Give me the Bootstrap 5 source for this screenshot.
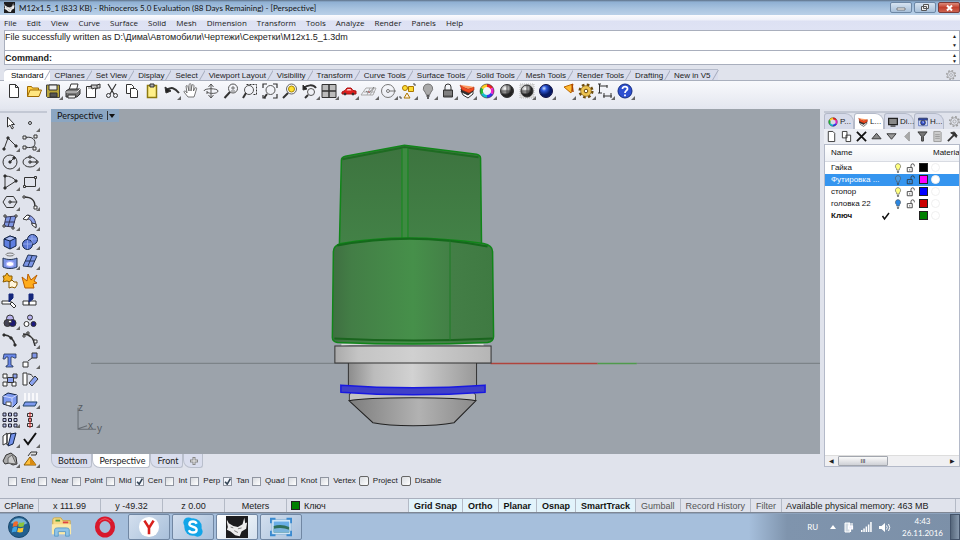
<!DOCTYPE html>
<html lang="en">
<head>
<meta charset="utf-8">
<meta name="viewport" content="width=device-width, initial-scale=1">
<title>M12x1.5_1 - Rhinoceros 5.0</title>
<link href="https://cdn.jsdelivr.net/npm/bootstrap@5.3.0/dist/css/bootstrap.min.css" rel="stylesheet">
<style>
:root{--face:#e0e3ec;--line:#a9afbd;--ui:"Liberation Sans",Arial,sans-serif;--seg:Lato,"Open Sans",sans-serif}
body{font-family:var(--ui);font-size:9px;line-height:12px;color:#222;background:var(--face);height:100vh;overflow:hidden}
main{min-height:0}
button,input{font:inherit;color:inherit}
button{border:0;background:none;padding:0}
a{color:inherit;text-decoration:none}
svg{display:block}
.titlebar{height:15px;background:linear-gradient(#5d7086 0,#8fb0d3 2px,#a9c4e0 9px,#b9d0e8 15px);font-family:var(--seg);font-size:8px;color:#111}
.winbtn{width:22px;height:11px;border:1px solid #6d87a5;border-radius:2px;background:linear-gradient(#d6e3f1,#a7bfd9);display:flex;align-items:center;justify-content:center}
.winbtn.shut{background:linear-gradient(#dc8b7c,#c2402e 50%,#cc6250);border-color:#7c3a38}
.winbtns{gap:2px}
.menus{height:15px;background:linear-gradient(#fafbfe 0,#eef0f9 5px,#dde1f3 6px,#dfe3f4);font-family:"Open Sans",sans-serif;font-size:8px;gap:10px}
.history{height:21px;background:#fff;border:1px solid var(--line)}
.cmdline{height:14px;background:#fff;border:1px solid var(--line);border-top:0}
.cmdline label{font-weight:bold}
.cmdline input{border:0;outline:0;height:10px;min-width:0;background:none}
.spin{width:9px;font-size:5px;line-height:6px;text-align:center}
.spin span{display:block}
.tabstrip{height:12px;border-bottom:1px solid var(--line);font-size:8px}
.tabstrip .tb{height:11px;line-height:11px;padding:0 7px 0 4px;position:relative;color:#222;background:#d9ddec;border-top:1px solid #b6bccb;white-space:nowrap}
.tabstrip .tb::after{content:"";position:absolute;right:2px;top:0;width:1px;height:10px;background:#a4aabb;transform:skewX(-30deg)}
.tabstrip .tb.on{background:#fff;color:#000;height:12px;padding-left:7px;border-radius:4px 0 0 0}
.toolbar-std{height:28px;background:linear-gradient(#f8f9fc,#e3e6ef)}
.tools-h{display:grid;grid-template-columns:repeat(32,1fr);width:100%;max-width:631px}
.tool{position:relative;display:flex;align-items:center;justify-content:center;min-width:0;min-height:0}
.tool svg,.ic{width:16px;height:16px;fill:none;stroke:#333;stroke-width:1;overflow:visible}
.tool.more::after{content:"";position:absolute;right:0;bottom:1px;border:2px solid #666;border-left-color:transparent;border-top-color:transparent}
.sidebar{width:51px;padding-top:2px}
.grip{height:2px;background:#c3c8d4}
.tools-v{display:grid;grid-template-columns:20px 20px;grid-auto-rows:1fr;flex:1 1 0;min-height:0}
.stage{min-width:0}
.viewport{background:#9ca3ab;position:relative;min-height:0}
.viewport>svg{position:absolute;inset:0;width:100%;height:100%}
.vtitle{position:absolute;left:0;top:0;height:13px;padding:0 4px 0 6px;background:#8ba6c2;font-family:var(--seg);color:#111}
.vtabs{height:15px}
.vtabs button{padding:0 4px 0 6px;height:14px;border:1px solid #b9bfcc;border-top:0;border-radius:0 0 3px 8px;background:#dadeee;font-family:var(--seg)}
.vtabs .on{background:#fff}
.panel{width:136px;padding:2px 0}
.ptabs{height:16px}
.ptabs button{height:16px;width:30px;padding-left:3px;display:flex;align-items:center;gap:2px;background:#d7dbea;border:1px solid #b4bac9;border-bottom:0;border-radius:3px 9px 0 0;white-space:nowrap;font-size:8px}
.ptabs .on{background:#fff}
.ptabs .ic{width:10px;height:10px;flex:none}
.ptools{height:15px;background:#eceef4;display:grid;grid-template-columns:repeat(9,1fr)}
.ptools svg{width:11px;height:11px}
.layers{background:#fff;border:1px solid #b4bac9;min-height:0;overflow:hidden;font-size:8px}
.layers table{width:100%;table-layout:fixed;border-collapse:collapse;color:#111}
.layers .c-name{width:54px}.layers .c-tick{width:13px}.layers .c-flag{width:12px}
.layers th{font-weight:normal;height:16px;background:linear-gradient(#fff,#f0f2f6);border-bottom:1px solid #d8dbe2;white-space:nowrap}
.layers td{height:12px;white-space:nowrap}
.layers td,.layers th{padding:0}
.layers td:first-child,.layers th:first-child{padding-left:6px}
.layers th:last-child{padding-left:4px}
.layers .picked{background:#3595ef;color:#fff}
.layers svg{width:10px;height:10px;fill:none;stroke:#333;margin:auto}
.sw{width:9px;height:9px;border:1px solid #222;display:block;margin:auto}
.c-black{background:#000}.c-mag{background:#f0f}.c-blue{background:#00f}.c-red{background:#c00}.c-green{background:#008000}
.dotm{width:9px;height:9px;border-radius:50%;border:1px solid #f0f0f0;display:block;margin-left:2px}
.picked .dotm{background:#fff}
.hscroll{height:11px;background:#f0f0f2;font-size:6px;border-top:1px solid #ddd}
.thumb{width:50px;height:10px;border:1px solid #a2a6ae;background:linear-gradient(#fafafa,#cfd1d6);border-radius:1px;line-height:8px;text-align:center}
.osnap{height:29px;gap:3px;padding-top:6px;font-size:8px}
.osnap label{display:flex;align-items:center;gap:4px}
.osnap input{appearance:none;width:9px;height:9px;margin:0;border:1px solid #9095a0;background:linear-gradient(135deg,#d8dbe0,#fff);display:block}
.osnap input:checked{background:#f4f6fc url("data:image/svg+xml,%3Csvg xmlns='http://www.w3.org/2000/svg' viewBox='0 0 8 8'%3E%3Cpath d='M1.5 4l2 2.2L6.5 1' fill='none' stroke='%23345' stroke-width='1.5'/%3E%3C/svg%3E") center/8px no-repeat}
.osnap .big input{width:10px;height:10px;border-radius:2px;border-color:#666}
.statusbar{height:15px;border-top:1px solid #a9afbd;border-bottom:1px solid #7f8794}
.statusbar>*{border-right:1px solid #b4bac6;display:flex;align-items:center;justify-content:center;white-space:nowrap;height:13px}
.statusbar .w1{width:62px}
.statusbar .w0{width:39px}
.statusbar .wl{width:122px}
.statusbar button,.statusbar .w0,.statusbar .w1,.statusbar .wl{flex:none}
.statusbar button{padding:0 5px;color:#555}
.statusbar .on{background:#e2f3fb;font-weight:bold;color:#111}
.taskbar{height:27px;gap:2px;background:linear-gradient(90deg,#a6bfdc 0,#a6bfdc 78%,#7f94ad 82%,#7c90a8 100%);border-top:1px solid #8ea3bd;color:#fff;font-family:var(--seg)}
.task{width:42px;height:26px;display:flex;align-items:center;justify-content:center}
.task.orb{width:38px}
.task svg{width:24px;height:22px}
.task.open{border:1px solid #7187a3;border-radius:2px;background:linear-gradient(135deg,#d3dfee,#a9c0db)}
.task.cur{background:linear-gradient(135deg,#fff,#d3e0ee)}
.tray{gap:7px;font-size:8px}
.desk{width:10px;height:26px;background:linear-gradient(90deg,#56677b,#8799ad);border:1px solid #44546a}
</style>
<script src="https://cdn.jsdelivr.net/npm/bootstrap@5.3.0/dist/js/bootstrap.bundle.min.js"></script>
</head>
<body class="d-flex flex-column">
<svg width="0" height="0" class="position-absolute" aria-hidden="true">
<defs>
<radialGradient id="gGray" cx=".35" cy=".3"><stop offset="0" stop-color="#fff"/><stop offset=".6" stop-color="#999"/><stop offset="1" stop-color="#222"/></radialGradient>
<radialGradient id="gBlue" cx=".35" cy=".3"><stop offset="0" stop-color="#cfe0ff"/><stop offset=".4" stop-color="#2c58d8"/><stop offset="1" stop-color="#061a66"/></radialGradient>
<symbol id="wheel" viewBox="0 0 16 16"><g fill="none" stroke-width="3"><path stroke="#e22" d="M8 2.500A5.500 5.500 0 0 1 12.800 5.300"/><path stroke="#e2c" d="M12.800 5.300a5.500 5.500 0 0 1 0 5.500"/><path stroke="#33e" d="M12.800 10.800A5.500 5.500 0 0 1 8 13.500"/><path stroke="#1bc" d="M8 13.500a5.500 5.500 0 0 1-4.800-2.700"/><path stroke="#2b3" d="M3.200 10.800a5.500 5.500 0 0 1 0-5.500"/><path stroke="#fc2" d="M3.200 5.300A5.500 5.500 0 0 1 8 2.500"/></g><circle cx="8" cy="8" r="7" fill="none" stroke="#333" stroke-width=".6"/></symbol>
<symbol id="strata" viewBox="0 0 16 16"><path d="M2 8l2 4 5 3 5-4V8z" fill="#fff" stroke="#333"/><path d="M2 6l1 3 6 3 5-4V5z" fill="#333" stroke="#222"/><path d="M1 2l8 4 6-2v3l-5 3-7-3z" fill="#f04a20" stroke="#9a2a10" stroke-width=".6"/><path d="M1 2l8 4 6-2-5-1z" fill="#ff9a60" stroke="none"/></symbol>
<symbol id="cog" viewBox="0 0 16 16"><circle cx="8" cy="8" r="5.500" fill="none" stroke="#999" stroke-width="1.200"/><circle cx="8" cy="8" r="2.300" fill="none" stroke="#999"/><circle cx="8" cy="8" r="7" fill="none" stroke="#999" stroke-width="2" stroke-dasharray="2.700 2.800"/></symbol>
<symbol id="bulb" viewBox="0 0 10 12"><path d="M5 .7a3.300 3.300 0 0 0-2 5.800l.5 2h3l.5-2A3.300 3.300 0 0 0 5 .7z" stroke="#555" stroke-width=".7"/><path d="M3.700 10h2.600M4 11.500h2" stroke="#444"/></symbol>
<symbol id="unlock" viewBox="0 0 12 12"><path d="M1.500 5.500h6v5h-6zM6 5V3a2 2 0 0 1 4 0v1M4.500 7.500v1.500" fill="none" stroke="#333"/></symbol>
<symbol id="rhino" viewBox="0 0 24 24"><path d="M0 0h24v24H0z" fill="#1c1c1e" stroke="none"/><path d="M1 4l2 4 5 3 5 1 5-3 2-7 1 6 2-1-1 7-5 3-2 5-5-1-5-4-4-2 1-3-1-5z" fill="#ededed" stroke="none"/><path d="M5 12l3 1M9 16l4 2M13 14l4-1" stroke="#777" fill="none"/></symbol>
</defs>
</svg>

<header>
<div class="titlebar d-flex align-items-center ps-1 pe-0">
<svg width="11" height="11" class="flex-shrink-0"><use href="#rhino"/></svg>
<span class="ms-1 flex-grow-1">M12x1.5_1 (833 KB) - Rhinoceros 5.0 Evaluation (88 Days Remaining) - [Perspective]</span>
<div class="winbtns d-flex">
<button type="button" class="winbtn" aria-label="Minimize"><svg width="10" height="8"><path d="M1 4h8v2H1z" fill="#fff" stroke="#555" stroke-width=".7"/></svg></button>
<button type="button" class="winbtn" aria-label="Restore"><svg width="10" height="9"><path d="M3.500 1.500h5v4h-5zM1.500 3.500h5v4h-5z" fill="#eee" stroke="#555"/></svg></button>
<button type="button" class="winbtn shut" aria-label="Close"><svg width="9" height="8"><path d="M2 1.500l5 5M7 1.500l-5 5" stroke="#fff" stroke-width="2"/></svg></button>
</div>
</div>
<nav class="menus d-flex align-items-center ps-1">
<a href="#">File</a><a href="#">Edit</a><a href="#">View</a><a href="#">Curve</a><a href="#">Surface</a><a href="#">Solid</a><a href="#">Mesh</a><a href="#">Dimension</a><a href="#">Transform</a><a href="#">Tools</a><a href="#">Analyze</a><a href="#">Render</a><a href="#">Panels</a><a href="#">Help</a>
</nav>
<div class="history d-flex justify-content-between ms-1">
<span>File successfully written as D:\Дима\Автомобили\Чертежи\Секретки\M12x1.5_1.3dm</span>
<div class="spin d-flex flex-column justify-content-around"><span>▲</span><span>▼</span></div>
</div>
<div class="cmdline d-flex align-items-center ms-1 mb-1">
<label for="cmd">Command:</label><input id="cmd" type="text" class="flex-grow-1">
<div class="spin"><span>▲</span><span>▼</span></div>
</div>
<div class="tabstrip d-flex ps-1">
<button class="tb on" type="button">Standard</button><button class="tb" type="button">CPlanes</button><button class="tb" type="button">Set View</button><button class="tb" type="button">Display</button><button class="tb" type="button">Select</button><button class="tb" type="button">Viewport Layout</button><button class="tb" type="button">Visibility</button><button class="tb" type="button">Transform</button><button class="tb" type="button">Curve Tools</button><button class="tb" type="button">Surface Tools</button><button class="tb" type="button">Solid Tools</button><button class="tb" type="button">Mesh Tools</button><button class="tb" type="button">Render Tools</button><button class="tb" type="button">Drafting</button><button class="tb" type="button">New in V5</button>
<button type="button" class="ms-auto me-1" aria-label="Toolbar options"><svg width="10" height="10"><use href="#cog"/></svg></button>
</div>
<div class="toolbar-std ps-1 pb-2 d-flex">
<div class="tools-h">
<button class="tool" type="button" aria-label="New"><svg viewBox="0 0 16 16"><path d="M3.500 1.500h6l3 3v10h-9zM9.500 1.500v3h3" fill="#fff"/></svg></button>
<button class="tool" type="button" aria-label="Open"><svg viewBox="0 0 16 16"><path d="M1.500 13.500v-10h4l1 1.500h6v2" fill="#ffd24a" stroke="#a06a00"/><path d="M1.500 13.500L4 7h11.500L13 13.500z" fill="#ffe680" stroke="#a06a00"/></svg></button>
<button class="tool more" type="button" aria-label="Save"><svg viewBox="0 0 16 16"><path d="M1.500 2h13v12.500h-12l-1-1z" fill="#b9a53a" stroke="#444"/><path d="M4 2h8v5H4z" fill="#eee"/><path d="M5 10h7v4H5z" fill="#555"/></svg></button>
<button class="tool" type="button" aria-label="Print"><svg viewBox="0 0 16 16"><path d="M4 7l2-6h7l-1.500 6" fill="#fff"/><path d="M1 8l3-2h11v5l-3 3H1z" fill="#777"/><path d="M3 12h8l-1 3H3z" fill="#eee"/><path d="M1 9h11l3-3" stroke="#ddd"/></svg></button>
<button class="tool" type="button" aria-label="Properties"><svg viewBox="0 0 16 16"><path d="M1.500 3.500h9v11h-9z" fill="#fff"/><path d="M3 5h4" stroke="#777"/><path d="M6 2h6v4l-2-1-3 1zM12 2l3-1v4h-3" fill="#ccc"/></svg></button>
<button class="tool" type="button" aria-label="Cut"><svg viewBox="0 0 16 16"><path d="M4 1l6 10M12 1L6 11" stroke-width="1.200"/><circle cx="4.500" cy="12.500" r="2"/><circle cx="11.500" cy="12.500" r="2"/></svg></button>
<button class="tool" type="button" aria-label="Copy"><svg viewBox="0 0 16 16"><path d="M2.500 1.500h5l2 2v7h-7z" fill="#fff"/><path d="M6.500 5.500h5l2 2v7h-7z" fill="#fff"/></svg></button>
<button class="tool" type="button" aria-label="Paste"><svg viewBox="0 0 16 16"><path d="M3.500 2.500h9v12h-9z" fill="#fff08a" stroke="#8d7a10" stroke-width="1.500"/><path d="M6 1h4v3H6z" fill="#aaa"/></svg></button>
<button class="tool more" type="button" aria-label="Undo"><svg viewBox="0 0 16 16"><path d="M2 8c5-5 9-3 13 2" stroke-width="2"/><path d="M1 4l1 6 5-2z" fill="#222"/></svg></button>
<button class="tool" type="button" aria-label="Pan"><svg viewBox="0 0 16 16"><path d="M5 14l-4-5c0-2 2-1 3 1L3 3c1-1 2 0 2 1l1 4V1.500c1-1 2-1 2 0V8l1-6c1-1 2 0 2 1l-.5 5L12 5c1-1 2 0 1.500 1L12 11l-1 3z" fill="#fff" stroke="#555" stroke-width=".8"/></svg></button>
<button class="tool" type="button" aria-label="Rotate view"><svg viewBox="0 0 16 16"><path d="M8 1v14M5.500 4L8 1l2.500 3M5.500 12L8 15l2.500-3" stroke="#555"/><path d="M1 8c0-3 14-3 14 0s-9 3-11 1M4 11V8" stroke="#555"/></svg></button>
<button class="tool" type="button" aria-label="Zoom dynamic"><svg viewBox="0 0 16 16"><circle cx="10" cy="5.500" r="4.500" stroke="#555"/><path d="M7 9l-5.500 6" stroke-width="2"/><path d="M10 3v4M8 5h4M8 8h4" stroke="#555" stroke-width=".8"/></svg></button>
<button class="tool" type="button" aria-label="Zoom window"><svg viewBox="0 0 16 16"><path d="M4.500 1.500h10v10h-3" stroke-dasharray="2 1"/><circle cx="7" cy="7" r="4.500" stroke="#555"/><path d="M4 10l-3 5" stroke-width="2"/></svg></button>
<button class="tool" type="button" aria-label="Zoom extents"><svg viewBox="0 0 16 16"><path d="M1 5V1h4M11 1h4v4M15 11v4h-4M1 12v3h3" stroke-width="1.200"/><circle cx="8.500" cy="7" r="4.500" stroke="#555"/><path d="M5 11l-3 4" stroke-width="2"/></svg></button>
<button class="tool" type="button" aria-label="Zoom selected"><svg viewBox="0 0 16 16"><circle cx="9.500" cy="6" r="5" stroke="#666"/><circle cx="9.500" cy="6" r="3" fill="#ffe033" stroke="#a80"/><path d="M6 10l-5 5" stroke-width="2"/></svg></button>
<button class="tool more" type="button" aria-label="Undo view"><svg viewBox="0 0 16 16"><circle cx="9" cy="9" r="3.500" stroke="#555"/><path d="M2 5c3-3 9-4 12 0" stroke-width="2"/><path d="M1 2v5l4-1z" fill="#222"/><path d="M6 12l-3 3" stroke-width="2"/></svg></button>
<button class="tool more" type="button" aria-label="Four viewports"><svg viewBox="0 0 16 16"><path d="M1 1.500h14v13H1z" fill="#bbb"/><path d="M8 1v14M1 8h14" stroke-width="1.500"/></svg></button>
<button class="tool more" type="button" aria-label="Named view"><svg viewBox="0 0 16 16"><path d="M1 9l3-1.500L6 5h4l2 2.500 3 .5v3H1z" fill="#e02020" stroke="#a11"/><path d="M6.500 6h3l1 1.500H5.500z" fill="#fcc" stroke="none"/><circle cx="4" cy="11" r="1" fill="#222"/><circle cx="12" cy="11" r="1" fill="#222"/></svg></button>
<button class="tool more" type="button" aria-label="Set CPlane"><svg viewBox="0 0 16 16"><path d="M0 12L5 5h10l-3 7zM3 9h11M6 12l3-7M9 12l4-7" stroke="#aaa"/><path d="M5 8c3 3 5 0 8-4" stroke="#777"/><path d="M7 8l2 2" stroke="#c66"/></svg></button>
<button class="tool more" type="button" aria-label="Object snap"><svg viewBox="0 0 16 16"><circle cx="7" cy="8" r="6.500" stroke="#777"/><circle cx="7" cy="8" r="1.500" stroke="#777"/><path d="M9 8h6" stroke="#777"/></svg></button>
<button class="tool more" type="button" aria-label="Select"><svg viewBox="0 0 16 16"><circle cx="5" cy="5" r="2.500" fill="#fd3" stroke="#a70"/><path d="M8.500 3.500h5v5h-5z" fill="#fd3" stroke="#a70"/><path d="M7 10l3 5H4z" fill="#fed" stroke="#a70"/><path d="M13 1h2v2M0 13v2h2" stroke="#444"/></svg></button>
<button class="tool more" type="button" aria-label="Hide"><svg viewBox="0 0 16 16"><path d="M8 1a4.500 4.500 0 0 0-3 8l1.500 3h3L11 9A4.500 4.500 0 0 0 8 1z" fill="#aaa" stroke="#777"/><path d="M6.500 13h3M7 15h2" stroke-width="1.500"/></svg></button>
<button class="tool more" type="button" aria-label="Lock"><svg viewBox="0 0 16 16"><path d="M5 7V4a3 3 0 0 1 6 0v3"/><path d="M3.500 7h9v7h-9z" fill="#666"/><path d="M4 9h8M4 11h8" stroke="#999"/></svg></button>
<button class="tool more" type="button" aria-label="Layers"><svg><use href="#strata"/></svg></button>
<button class="tool more" type="button" aria-label="Properties panel"><svg><use href="#wheel"/></svg></button>
<button class="tool" type="button" aria-label="Shade"><svg viewBox="0 0 16 16"><circle cx="8" cy="8" r="6.500" fill="url(#gGray)"/><path d="M8 2v12M2 8h12" stroke="#333" stroke-width=".7"/></svg></button>
<button class="tool more" type="button" aria-label="Shaded viewport"><svg viewBox="0 0 16 16"><path d="M1 1h14v14H1z" fill="#ddd" stroke="#bbb" stroke-dasharray="1 1"/><circle cx="8" cy="8" r="6" fill="url(#gGray)"/><path d="M8 2v12M2 8h12" stroke="#333" stroke-width=".7"/></svg></button>
<button class="tool more" type="button" aria-label="Render"><svg viewBox="0 0 16 16"><circle cx="8" cy="8" r="6.500" fill="url(#gBlue)" stroke="#114"/></svg></button>
<button class="tool more" type="button" aria-label="Spotlight"><svg viewBox="0 0 16 16"><path d="M6 4l9-3-2 9z" fill="#fb3" stroke="#b60"/><path d="M14 1l1 8" stroke="#a40" stroke-width="1.500"/></svg></button>
<button class="tool more" type="button" aria-label="Options"><svg viewBox="0 0 16 16"><circle cx="8" cy="8" r="6.300" fill="none" stroke="#6b4a0c" stroke-width="2.500" stroke-dasharray="2.600 2.350"/><circle cx="8" cy="8" r="5.300" fill="#edc450" stroke="#8a6518" stroke-width=".7"/><circle cx="8" cy="8" r="1.800" fill="#fff" stroke="#6b4a0c"/></svg></button>
<button class="tool more" type="button" aria-label="Dimensions"><svg viewBox="0 0 16 16"><path d="M2.500 1v9M2.500 3h8M6 13h9M10 2v3M14 10v5"/><path d="M1 1h3M1 10h4M7 10v5"/></svg></button>
<button class="tool more" type="button" aria-label="Help"><svg viewBox="0 0 16 16"><circle cx="8" cy="8" r="7" fill="#2d4fd0" stroke="#112a80"/><path d="M5.500 6c0-3.500 5.500-3 5 0-.3 1.700-2.500 1.800-2.500 4M8 11.500v1.800" stroke="#fff" stroke-width="1.800"/></svg></button>
</div>
</div>
</header>

<main class="d-flex flex-grow-1">
<aside class="sidebar d-flex flex-column flex-shrink-0">
<div class="grip me-1"></div>
<div class="tools-v">
<button class="tool" type="button" aria-label="Pointer"><svg viewBox="0 0 16 16"><path d="M5.500 2v10l2.500-2 2 4 1.500-1-2-3.500h3z" fill="#fff"/></svg></button>
<button class="tool more" type="button" aria-label="Point"><svg viewBox="0 0 16 16"><circle cx="8" cy="8" r="1.500"/></svg></button>
<button class="tool more" type="button" aria-label="Polyline"><svg viewBox="0 0 16 16"><path d="M2 14L6 3l8 8"/><path d="M1 13h2v2H1zM5 2h2v2H5zM13 10h2v2h-2z" fill="#333"/></svg></button>
<button class="tool more" type="button" aria-label="Curve"><svg viewBox="0 0 16 16"><path d="M2 3c6-2 11 0 11 5s-5 5-10 4"/><path d="M1 1h3v3H1zM12 0h3v3h-3zM1 11h3v3H1zM11 12h3v3h-3z" fill="#eee"/></svg></button>
<button class="tool more" type="button" aria-label="Circle"><svg viewBox="0 0 16 16"><circle cx="8" cy="8" r="7"/><path d="M8 8l4-4" /><path d="M7 7h2v2H7zM11 3h2v2h-2z" fill="#222"/></svg></button>
<button class="tool more" type="button" aria-label="Ellipse"><svg viewBox="0 0 16 16"><ellipse cx="8" cy="8" rx="7" ry="5"/><path d="M7 2h2v2H7zM7 7h2v2H7zM14 7h2v2h-2z" fill="#ccc"/><path d="M8 8h6"/></svg></button>
<button class="tool more" type="button" aria-label="Arc"><svg viewBox="0 0 16 16"><path d="M3 14V2c5 0 9 2 11 5z"/><path d="M2 1h2v2H2zM2 13h2v2H2zM13 6h2v2h-2z" fill="#222"/></svg></button>
<button class="tool more" type="button" aria-label="Rectangle"><svg viewBox="0 0 16 16"><path d="M2.500 3.500h11v9h-11z"/><path d="M1.500 11.500h2v2h-2zM12.500 2.500h2v2h-2z" fill="#ddd"/></svg></button>
<button class="tool more" type="button" aria-label="Polygon"><svg viewBox="0 0 16 16"><path d="M4.500 2.500h7L15 8l-3.500 5.500h-7L1 8z"/><path d="M8 8h7M7 7h2v2H7z"/></svg></button>
<button class="tool more" type="button" aria-label="Fillet"><svg viewBox="0 0 16 16"><path d="M2 3c8 0 11 3 11 10" stroke-width="1.500"/><path d="M1 2h2v2H1zM12 12h3v3h-3z" fill="#fff"/></svg></button>
<button class="tool more" type="button" aria-label="Surface from points"><svg viewBox="0 0 16 16"><path d="M4 3l10-1-3 11-9-1z" fill="#7f97e4" stroke="#335"/><path d="M3 8h10M9 2L6 13" stroke="#335"/><path d="M2 1h2v2H2zM13 1h2v2h-2zM1 11h2v2H1zM10 13h2v2h-2z" fill="#fff"/></svg></button>
<button class="tool more" type="button" aria-label="Sweep"><svg viewBox="0 0 16 16"><path d="M2 4l4-3c5 1 8 5 8 12l-4-3c0-3-2-5-4-5z" fill="#8ea2e8" stroke="#335"/><path d="M5 1l3 1-3 4-4-1z" fill="#fff"/><path d="M10 9l4 1v4l-4-3z" fill="#fff"/></svg></button>
<button class="tool more" type="button" aria-label="Box"><svg viewBox="0 0 16 16"><path d="M2 5l6-3 6 2v8l-6 3-6-3z" fill="#5f7fe0" stroke="#124"/><path d="M2 5l6 2 6-3-6-2z" fill="#a9baf3" stroke="#124"/><path d="M8 7v8" stroke="#124"/></svg></button>
<button class="tool more" type="button" aria-label="Spheres"><svg viewBox="0 0 16 16"><circle cx="10.500" cy="5.500" r="5" fill="#6c86dd" stroke="#124"/><circle cx="5.500" cy="10.500" r="5" fill="#5b78d6" stroke="#124"/><path d="M5.500 6v9M1 10h9M10 1v9M6 5h9" stroke="#9db0f0" stroke-width=".8"/></svg></button>
<button class="tool more" type="button" aria-label="Surface from plane"><svg viewBox="0 0 16 16"><ellipse cx="8" cy="1.500" rx="4" ry="1.500" stroke="#777"/><path d="M1 5c4 2 10 2 14 0v9c-4 2-10 2-14 0z" fill="#7c95e6" stroke="#235"/><ellipse cx="8" cy="11" rx="4" ry="2.500" fill="#fff" stroke="#aaf"/></svg></button>
<button class="tool more" type="button" aria-label="Patch"><svg viewBox="0 0 16 16"><path d="M6 2l9 1-5 11-9-1z" fill="#7c95e6" stroke="#235"/><path d="M3 8h10M10 3L6 13" stroke="#235"/></svg></button>
<button class="tool" type="button" aria-label="Join"><svg viewBox="0 0 16 16"><path d="M1 3h2l2-3 2 3h3v3L8 9 5 8 1 9l1-3z" fill="#f5b021" stroke="#8a5a00"/><path d="M7 9l3-2 2 2h3v3l-2 3-3-1-3 1z" fill="#fff5dd" stroke="#8a5a00"/></svg></button>
<button class="tool" type="button" aria-label="Explode"><svg viewBox="0 0 16 16"><path d="M3 15L0 4l5 4 1-7 3 6 6-5-3 6 3 2-4 1 1 4z" fill="#ffac1c" stroke="#b85c00"/></svg></button>
<button class="tool" type="button" aria-label="Trim"><svg viewBox="0 0 16 16"><path d="M0 8h9v3H0z" fill="#fff"/><path d="M7 1h4v4L7 9z" fill="#14277c" stroke="#14277c"/><path d="M10 9l4 4-2 2-4-4z" fill="#fff"/></svg></button>
<button class="tool" type="button" aria-label="Split"><svg viewBox="0 0 16 16"><path d="M1 8h6v4H1zM7 8h7v4H7z" fill="#fff"/><path d="M7 1h4v5L7 9z" fill="#14277c" stroke="#14277c"/></svg></button>
<button class="tool more" type="button" aria-label="Boolean"><svg viewBox="0 0 16 16"><circle cx="8" cy="5.500" r="3.500" fill="#b8b2ef"/><circle cx="5.500" cy="10" r="3.500" fill="#445"/><circle cx="10.500" cy="10" r="3.500" fill="#1c1a72"/><circle cx="8" cy="8.500" r="1.500" fill="#fff"/></svg></button>
<button class="tool" type="button" aria-label="Ungroup"><svg viewBox="0 0 16 16"><circle cx="8" cy="4.500" r="2.500" fill="#b8b2ef"/><circle cx="4.500" cy="11" r="2.500" fill="#fff"/><circle cx="11.500" cy="11" r="2.500" fill="#1c1a82"/></svg></button>
<button class="tool" type="button" aria-label="Edit points"><svg viewBox="0 0 16 16"><path d="M2 3c6 0 10 5 11 10" stroke-width="1.500"/><path d="M1 2h2v2H1zM8 5h2v2H8zM12 12h2v2h-2z" fill="#222"/></svg></button>
<button class="tool more" type="button" aria-label="Control points"><svg viewBox="0 0 16 16"><path d="M1 2c7 0 11 5 12 12" stroke-width="1.500"/><path d="M4 1h2l8 8" stroke="#999"/><path d="M1 3h2v2H1zM5 0h2v2H5zM12 8h3v3h-3z" fill="#fff"/></svg></button>
<button class="tool" type="button" aria-label="Text"><svg viewBox="0 0 16 16"><path d="M2 2h12v4h-2l-1-1H9v8l2 1v1H4v-1l2-1V5H4L3 7H1z" fill="#6a88ea" stroke="#235" stroke-width=".8"/></svg></button>
<button class="tool more" type="button" aria-label="Move"><svg viewBox="0 0 16 16"><path d="M1 10h5v5H1z" fill="#fff"/><path d="M10 1h5v5h-5z" fill="#7f95e8"/><path d="M6 9l4-3"/></svg></button>
<button class="tool" type="button" aria-label="Copy objects"><svg viewBox="0 0 16 16"><path d="M1 2h4v4H1zM1 10h4v4H1zM10 10h4v4h-4z" fill="#fff"/><path d="M5.500 5.500h6v5h-6zM11 2h4v4h-4z" fill="#8ba0ee"/></svg></button>
<button class="tool" type="button" aria-label="Rotate"><svg viewBox="0 0 16 16"><path d="M1 1h4v12H1z" fill="#fff"/><path d="M13 4l3 3-6 7-3-3z" fill="#8ba3f0"/><path d="M6 2c3 0 4 1 5 3"/></svg></button>
<button class="tool more" type="button" aria-label="Cube tools"><svg viewBox="0 0 16 16"><path d="M1 4l5-3 9 2v8l-4 4-10-3z" fill="#7e9af0" stroke="#124"/><path d="M1 4l9 2 5-3M10 6v9" stroke="#cdd6fa"/><path d="M4 10h5v4l-5-1z" fill="#fff" stroke="#555"/></svg></button>
<button class="tool more" type="button" aria-label="Project"><svg viewBox="0 0 16 16"><path d="M3 1v8M7 1v8M11 1v8M15 1v8" stroke="#fff" stroke-width="1.500"/><path d="M3 10h12l-2 4H1z" fill="#7f9bf0" stroke="#246"/></svg></button>
<button class="tool more" type="button" aria-label="Array"><svg viewBox="0 0 16 16"><path d="M1 1h3v3H1zM6.500 1h3v3h-3zM12 1h3v3h-3zM1 6.500h3v3H1zM6.500 6.500h3v3h-3zM12 6.500h3v3h-3zM1 12h3v3H1zM6.500 12h3v3h-3zM12 12h3v3h-3z" fill="#bcc6ee" stroke="#223"/></svg></button>
<button class="tool more" type="button" aria-label="Align"><svg viewBox="0 0 16 16"><path d="M5.500 1.500h5v3h-5zM6.500 6.500h3v3h-3zM5.500 11.500h5v3h-5z" fill="#f4dcdc"/><path d="M8 0v16" stroke="#c22"/></svg></button>
<button class="tool more" type="button" aria-label="Analyze"><svg viewBox="0 0 16 16"><path d="M1 5l4-3v10l-4 2zM5 3l4-1v9l-4 3z" fill="#fff"/><path d="M9 3l5-1-3 11-5 2z" fill="#7391ea" stroke="#124"/></svg></button>
<button class="tool more" type="button" aria-label="Check"><svg viewBox="0 0 16 16"><path d="M2 8l4 5 8-11" stroke="#111" stroke-width="2"/></svg></button>
<button class="tool more" type="button" aria-label="Mesh"><svg viewBox="0 0 16 16"><path d="M1 10l3-6 5-2 5 4 1 7-4 1-4-2-4 1z" fill="#aaa"/><path d="M6 12V7l4-3 4 9z" fill="#ccc" stroke="#666"/></svg></button>
<button class="tool more" type="button" aria-label="Light"><svg viewBox="0 0 16 16"><path d="M8 6l6 8H2z" fill="#ffbf3a" stroke="#8a5a00"/><path d="M8 6v8h6z" fill="#d98b12" stroke="none"/><path d="M6 5l3-4h6l-1 3H9" fill="#ddd"/></svg></button>
</div>
</aside>

<section class="stage d-flex flex-column flex-grow-1 me-1">
<div class="viewport flex-grow-1">
<svg viewBox="51 109 768 346" preserveAspectRatio="xMidYMid slice" aria-label="Model view">
<defs>
<linearGradient id="gDrum"><stop offset="0" stop-color="#3f6f41"/><stop offset=".12" stop-color="#437e46"/><stop offset=".5" stop-color="#46904a"/><stop offset=".75" stop-color="#437e46"/><stop offset="1" stop-color="#3f7a42"/></linearGradient>
<linearGradient id="gSteel"><stop offset="0" stop-color="#aaa"/><stop offset=".15" stop-color="#c4c4c4"/><stop offset=".5" stop-color="#d0d0d0"/><stop offset="1" stop-color="#b5b5b5"/></linearGradient>
<linearGradient id="gNeck"><stop offset="0" stop-color="#8c8c8c"/><stop offset=".2" stop-color="#bcbcbc"/><stop offset=".5" stop-color="#d2d2d2"/><stop offset="1" stop-color="#999"/></linearGradient>
<linearGradient id="gCone"><stop offset="0" stop-color="#7d7d7d"/><stop offset=".55" stop-color="#b2b2b2"/><stop offset="1" stop-color="#8a8a8a"/></linearGradient>
<linearGradient id="gHex" x2="0" y2="1"><stop offset="0" stop-color="#3d743f"/><stop offset="1" stop-color="#438247"/></linearGradient>
</defs>
<path d="M91 363.200h399v1.200H91zM636 363.200h184v1.200H636z" fill="#7c8388"/>
<path d="M490 363.200h107v1.400H490z" fill="#b0443c"/>
<path d="M597 363.200h39v1.400h-39z" fill="#4f9a4c"/>
<path d="M348 362h128v27H348z" fill="url(#gNeck)" stroke="#333"/>
<path d="M349 395l2-3h121l3 3v6H349z" fill="#c3c3c3" stroke="#444"/>
<path d="M348.500 401c20-4 107-4 127 0L453.500 423c-20 4-62 4-81 0z" fill="url(#gCone)" stroke="#222"/>
<path d="M340.500 385.500q72 5 144 0v7q-72 5-144 0z" fill="#4040c8" stroke="#1818e0" stroke-width="1.500"/>
<path d="M334.500 346.500h156v17h-156z" fill="url(#gSteel)" stroke="#333"/>
<path d="M341 345q70-3 142 0" stroke="#ddd" stroke-width="1.500" fill="none"/>
<path d="M339 247l2-86q0-3 4-4l59-11 72 9q4 1 4 4l1 89z" fill="url(#gHex)" stroke="#118519" stroke-width="1.500"/>
<path d="M342 160l62-12 74 10" fill="none" stroke="#1e6b22" stroke-width="2"/>
<path d="M402 149h5v90h-5z" fill="#3e8a42"/>
<path d="M401.500 149v91M407.500 149v91" fill="none" stroke="#128c1c"/>
<path d="M333 252q0-6 8-8 62-11 142 0 9 2 9 8l1 85q0 5-6 6-75 3-150 0-5-1-5-5z" fill="url(#gDrum)" stroke="#118519" stroke-width="1.500"/>
<path d="M337 246q74-14 150 1" fill="none" stroke="#14691b" stroke-width="2"/>
<path d="M334 339q80 4 158 0" fill="none" stroke="#1a651e" stroke-width="2"/>
<path d="M449.500 241v100" fill="none" stroke="#1e7a26"/>
<g stroke="#666c73" fill="none"><path d="M78 408v22M78 429.500h18M78 429l9-3"/></g>
<g fill="#555b62" font-family="Liberation Sans,sans-serif" font-size="10"><text x="78" y="411">z</text><text x="88" y="429">x</text><text x="97" y="432">y</text></g>
</svg>
<button type="button" class="vtitle d-flex align-items-center gap-1">Perspective<svg width="8" height="11"><path d="M.5 1v9" stroke="#333"/><path d="M2 4h6L5 8z" fill="#111"/></svg></button>
</div>
<div class="vtabs d-flex"><button type="button">Bottom</button><button type="button" class="on">Perspective</button><button type="button">Front</button><button type="button" aria-label="New viewport"><svg width="8" height="8"><path d="M4 0v8M0 4h8" stroke="#888" stroke-width="3"/><path d="M4 1v6M1 4h6" stroke="#eee"/></svg></button></div>
</section>

<aside class="panel d-flex flex-column flex-shrink-0">
<div class="grip"></div>
<div class="ptabs d-flex align-items-end">
<button type="button"><svg class="ic"><use href="#wheel"/></svg>P...</button>
<button type="button" class="on"><svg class="ic"><use href="#strata"/></svg>L...</button>
<button type="button"><svg class="ic" viewBox="0 0 16 16"><path d="M1 2h14v10H1z" fill="#888" stroke="#222" stroke-width="2"/><path d="M4 14.500h8" stroke-width="2"/></svg>Di...</button>
<button type="button"><svg class="ic" viewBox="0 0 16 16"><path d="M1 2h14v12H1z" fill="#dde6fb" stroke="#2c49a8"/><path d="M1 2h14v3H1z" fill="#2c49c8"/><circle cx="8" cy="9" r="4" fill="#2c49c8"/><path d="M7 8q1.500-2 2 0l-1 2" stroke="#fff"/></svg>H...</button>
<span class="ms-auto align-self-center"><svg width="11" height="11"><use href="#cog"/></svg></span>
</div>
<div class="ptools">
<button class="tool" type="button" aria-label="New layer"><svg viewBox="0 0 12 12"><path d="M2.500.5h5l2 2v9h-7z" fill="#fff"/></svg></button>
<button class="tool" type="button" aria-label="New sublayer"><svg viewBox="0 0 12 12"><path d="M1.500.5h5v7h-5zM5.500 4.500h5v7h-5z" fill="#fff"/></svg></button>
<button class="tool" type="button" aria-label="Delete"><svg viewBox="0 0 12 12"><path d="M1 1l10 10M11 1L1 11" stroke="#111" stroke-width="2"/></svg></button>
<button class="tool" type="button" aria-label="Move up"><svg viewBox="0 0 12 12"><path d="M6 2.500l5 6H1z" fill="#888"/></svg></button>
<button class="tool" type="button" aria-label="Move down"><svg viewBox="0 0 12 12"><path d="M6 9L1 3h10z" fill="#999"/></svg></button>
<button class="tool" type="button" aria-label="Move left"><svg viewBox="0 0 12 12"><path d="M3 6l5-5v10z" fill="#aaa" stroke="#999"/></svg></button>
<button class="tool" type="button" aria-label="Filter"><svg viewBox="0 0 12 12"><path d="M1 1h10L7 6v5H5V6z" fill="#777"/></svg></button>
<button class="tool" type="button" aria-label="Columns"><svg viewBox="0 0 12 12"><path d="M2 .5h7l1 1v10H2zM3.500 4h5M3.500 6h5M3.500 8h5" fill="#ccc" stroke="#999"/></svg></button>
<button class="tool" type="button" aria-label="Tools"><svg viewBox="0 0 12 12"><path d="M1 11l7-7" stroke-width="2"/><path d="M4 2l4-1 3 4-1 2-3-3z" fill="#333"/></svg></button>
</div>
<div class="layers flex-grow-1 d-flex flex-column">
<table>
<colgroup><col class="c-name"><col class="c-tick"><col class="c-flag"><col class="c-tick"><col class="c-flag"><col></colgroup>
<thead><tr><th scope="col">Name</th><th></th><th></th><th></th><th></th><th scope="col">Material</th></tr></thead>
<tbody>
<tr><td>Гайка</td><td></td><td><svg><use href="#bulb" fill="#ffff80"/></svg></td><td><svg><use href="#unlock"/></svg></td><td><span class="sw c-black"></span></td><td><span class="dotm"></span></td></tr>
<tr class="picked"><td>Футировка ...</td><td></td><td><svg><use href="#bulb" fill="#4a9ae0"/></svg></td><td><svg><use href="#unlock"/></svg></td><td><span class="sw c-mag"></span></td><td><span class="dotm"></span></td></tr>
<tr><td>стопор</td><td></td><td><svg><use href="#bulb" fill="#ffff80"/></svg></td><td><svg><use href="#unlock"/></svg></td><td><span class="sw c-blue"></span></td><td><span class="dotm"></span></td></tr>
<tr><td>головка 22</td><td></td><td><svg><use href="#bulb" fill="#2a86e0"/></svg></td><td><svg><use href="#unlock"/></svg></td><td><span class="sw c-red"></span></td><td><span class="dotm"></span></td></tr>
<tr class="fw-bold"><td>Ключ</td><td><svg viewBox="0 0 10 10"><path d="M1.500 5l2 3L8 2" stroke="#111" stroke-width="1.500"/></svg></td><td></td><td></td><td><span class="sw c-green"></span></td><td><span class="dotm"></span></td></tr>
</tbody>
</table>
<div class="hscroll mt-auto d-flex align-items-center"><span class="px-1">◀</span><span class="thumb">III</span><span class="ms-auto pe-1">▶</span></div>
</div>
</aside>
</main>

<footer>
<div class="osnap d-flex align-items-start ps-2">
<label><input type="checkbox">End</label><label><input type="checkbox">Near</label><label><input type="checkbox">Point</label><label><input type="checkbox">Mid</label><label><input type="checkbox" checked>Cen</label><label><input type="checkbox">Int</label><label><input type="checkbox">Perp</label><label><input type="checkbox" checked>Tan</label><label><input type="checkbox">Quad</label><label><input type="checkbox">Knot</label><label><input type="checkbox">Vertex</label><label class="big"><input type="checkbox">Project</label><label class="big"><input type="checkbox">Disable</label>
</div>
<div class="statusbar d-flex">
<span class="w0">CPlane</span><span class="w1">x 111.99</span><span class="w1">y -49.32</span><span class="w1">z 0.00</span><span class="w1">Meters</span>
<span class="wl justify-content-start ps-1"><i class="sw c-green mx-0 me-1"></i>Ключ</span>
<button type="button" class="on">Grid Snap</button><button type="button" class="on">Ortho</button><button type="button" class="on">Planar</button><button type="button" class="on">Osnap</button><button type="button" class="on">SmartTrack</button><button type="button">Gumball</button><button type="button">Record History</button><button type="button">Filter</button>
<span class="flex-grow-1 justify-content-start ps-1 me-1">Available physical memory: 463 MB</span>
</div>
<div class="taskbar d-flex align-items-center">
<button type="button" class="task orb" aria-label="Start"><svg viewBox="0 0 26 24"><circle cx="13" cy="12" r="11.500" fill="#23608f" stroke="#174468"/><path d="M4 8a10 10 0 0 1 18 0c-6 4-12 0-18 0z" fill="#79b2d6"/><path d="M7 7q3-2 5-.5l-1 5q-2-1-5 .5z" fill="#f06a2c"/><path d="M13 7q3 1 6-.5l-1 5q-3 1-6 0z" fill="#8ac43c"/><path d="M6 13q3-2 5-.5l-1 5q-2-1-5 .5z" fill="#3fa4e6"/><path d="M12 13q3 1 6-.5l-1 5q-3 1-6 0z" fill="#ffc72e"/></svg></button>
<button type="button" class="task" aria-label="Explorer"><svg viewBox="0 0 26 24"><path d="M4 4q0-2 2-2h7l2 3h8v14H4z" fill="#f6da83" stroke="#c8a548"/><path d="M7 4h5v2H7z" fill="#4c9b3c"/><path d="M15 6h6v2h-6z" fill="#d44"/><path d="M3 9h21v11H3z" fill="#fbe9a8"/><path d="M6 22v-7q0-2 3-2h10q3 0 3 2v7h-4v-5h-8v5z" fill="#8fc4e8" stroke="#5a9ac8"/></svg></button>
<button type="button" class="task" aria-label="Opera"><svg viewBox="0 0 26 24"><ellipse cx="13" cy="12" rx="8.500" ry="9" fill="none" stroke="#d8182c" stroke-width="5"/><path d="M7 6q6-6 12 0" stroke="#f56070" fill="none"/></svg></button>
<button type="button" class="task open" aria-label="Yandex Browser"><svg viewBox="0 0 26 24"><circle cx="13" cy="12" r="11" fill="#fff"/><path d="M8 5l5 8 5-8M13 12v8" fill="none" stroke="#d8201c" stroke-width="2.800"/></svg></button>
<button type="button" class="task open" aria-label="Skype"><svg viewBox="0 0 26 24"><circle cx="13" cy="12" r="9.500" fill="#12a5e8"/><circle cx="8" cy="7" r="5.500" fill="#12a5e8"/><circle cx="18" cy="17" r="5.500" fill="#12a5e8"/><path d="M17 8.500Q16 6 13 6q-4 0-4 3c0 3 8 2 8 6q0 3-4 3-3.500 0-4.500-2.500" fill="none" stroke="#fff" stroke-width="2.500"/></svg></button>
<button type="button" class="task open cur" aria-label="Rhinoceros"><svg><use href="#rhino"/></svg></button>
<button type="button" class="task open" aria-label="Picture viewer"><svg viewBox="0 0 26 24"><path d="M3 4h21v16H3z" fill="#dceefb" stroke="#8fb8da"/><path d="M5 6h17v6H5z" fill="#69aee6"/><path d="M5 11q8-3 17 1v6H5z" fill="#2f6f5a"/><path d="M5 14q9-2 17 1v3H5z" fill="#7ab4dc"/><path d="M2 8V3h5M19 3h5v5M24 16v5h-5M7 21H2v-5" stroke="#3a8ad0" stroke-width="2" fill="none"/></svg></button>
<div class="tray ms-auto d-flex align-items-center">
<span class="me-1">RU</span>
<svg width="8" height="6"><path d="M4 1l3 4H1z" fill="#fff"/></svg>
<svg width="10" height="12"><path d="M1 2h5v9H1z" fill="#cfd8e2" stroke="#fff"/><path d="M5 2v3M8 2v3M4.500 5h4v3h-4zM6.500 8v3" stroke="#fff" fill="#eef" stroke-width="1.200"/></svg>
<svg width="11" height="10"><path d="M0 10V8h1.500v2zM2.300 10V6.500h1.500V10zM4.600 10V4.500h1.500V10zM6.900 10V2.500h1.500V10zM9.200 10V0h1.500v10z" fill="#fff"/></svg>
<svg width="12" height="11"><path d="M0 4h2.500L6 1v9L2.500 7H0z" fill="#fff"/><path d="M7.500 3.500q1.500 2 0 4M9.500 2q2.500 3.500 0 7" stroke="#fff" fill="none"/></svg>
<div class="text-center ms-1"><div>4:43</div><div>26.11.2016</div></div>
<button type="button" class="desk" aria-label="Show desktop"></button>
</div>
</div>
</footer>
</body>
</html>
